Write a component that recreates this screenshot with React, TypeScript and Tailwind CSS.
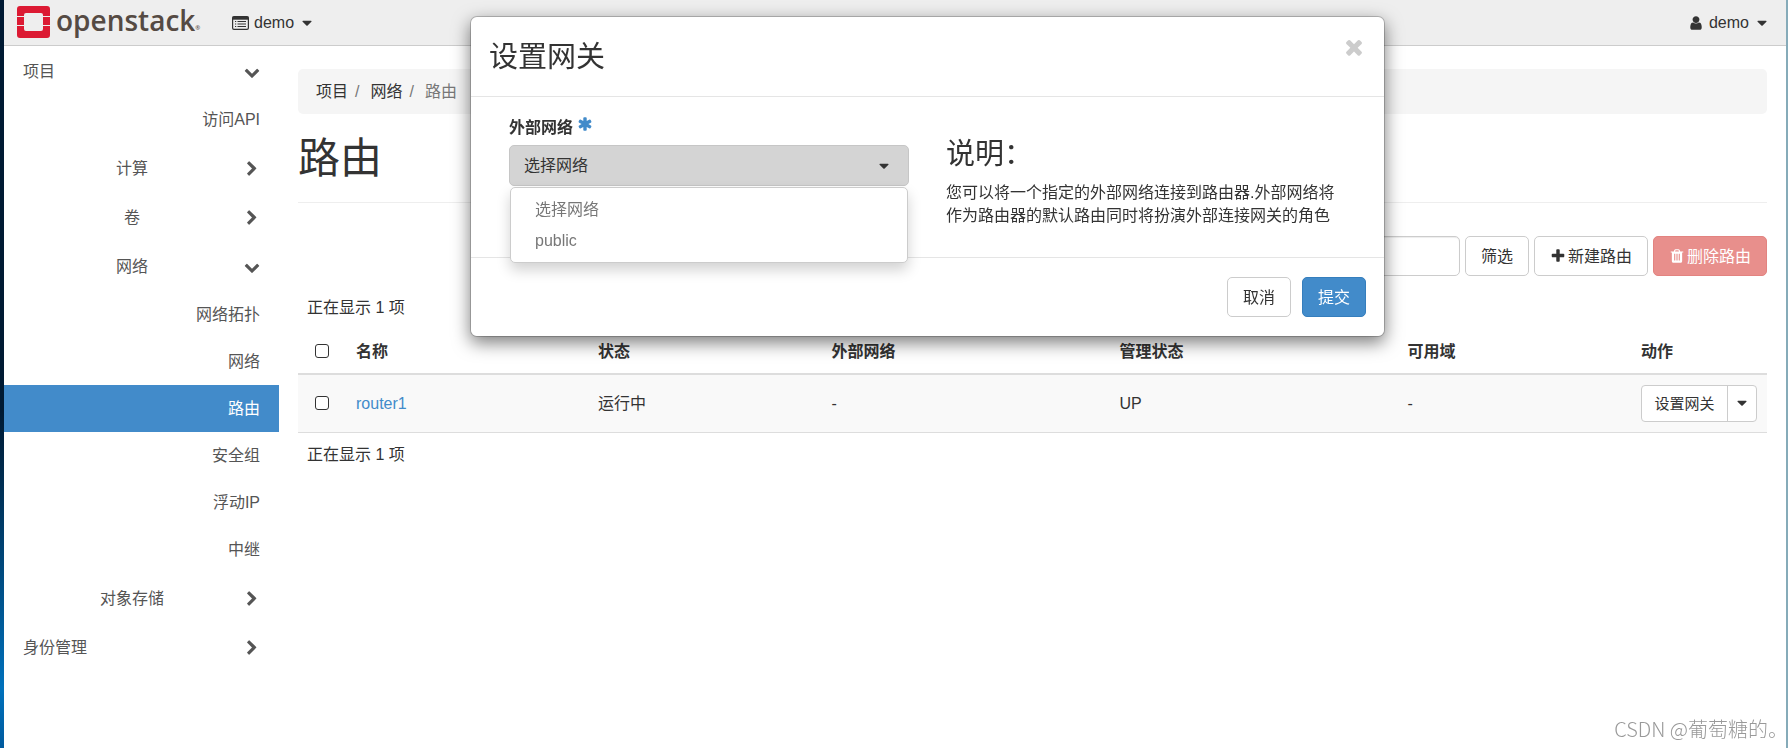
import { useState } from 'react';
import type { ReactNode } from 'react';

const icons = {
  caret: "M1408 704q0 26-19 45l-448 448q-19 19-45 19t-45-19l-448-448q-19-19-19-45t19-45 45-19h896q26 0 45 19t19 45z",
  chevronDown: "M1683 808l-742 741q-19 19-45 19t-45-19l-742-741q-19-19-19-45.5t19-45.5l166-165q19-19 45-19t45 19l531 531 531-531q19-19 45-19t45 19l166 165q19 19 19 45.5t-19 45.5z",
  chevronRight: "M1363 877l-742 742q-19 19-45 19t-45-19l-166-166q-19-19-19-45t19-45l531-531-531-531q-19-19-19-45t19-45l166-166q19-19 45-19t45 19l742 742q19 19 19 45t-19 45z",
  times: "M1490 1322q0 40-28 68l-136 136q-28 28-68 28t-68-28l-294-294-294 294q-28 28-68 28t-68-28l-136-136q-28-28-28-68t28-68l294-294-294-294q-28-28-28-68t28-68l136-136q28-28 68-28t68 28l294 294 294-294q28-28 68-28t68 28l136 136q28 28 28 68t-28 68l-294 294 294 294q28 28 28 68z",
  plus: "M1600 736v192q0 40-28 68t-68 28h-416v416q0 40-28 68t-68 28h-192q-40 0-68-28t-28-68v-416h-416q-40 0-68-28t-28-68v-192q0-40 28-68t68-28h416v-416q0-40 28-68t68-28h192q40 0 68 28t28 68v416h416q40 0 68 28t28 68z",
  asterisk: "M1546 1050q46 26 59.5 77.5t-12.5 97.5l-64 110q-26 46-77.5 59.5t-97.5-12.5l-266-153v307q0 52-38 90t-90 38h-128q-52 0-90-38t-38-90v-307l-266 153q-46 26-97.5 12.5t-77.5-59.5l-64-110q-26-46-12.5-97.5t59.5-77.5l266-154-266-154q-46-26-59.5-77.5t12.5-97.5l64-110q26-46 77.5-59.5t97.5 12.5l266 153v-307q0-52 38-90t90-38h128q52 0 90 38t38 90v307l266-153q46-26 97.5-12.5t77.5 59.5l64 110q26 46 12.5 97.5t-59.5 77.5l-266 154z",
  trash: "M704 1376v-704q0-14-9-23t-23-9h-64q-14 0-23 9t-9 23v704q0 14 9 23t23 9h64q14 0 23-9t9-23zm256 0v-704q0-14-9-23t-23-9h-64q-14 0-23 9t-9 23v704q0 14 9 23t23 9h64q14 0 23-9t9-23zm256 0v-704q0-14-9-23t-23-9h-64q-14 0-23 9t-9 23v704q0 14 9 23t23 9h64q14 0 23-9t9-23zm-544-992h448l-48-117q-7-9-17-11h-317q-10 2-17 11zm928 32v64q0 14-9 23t-23 9h-96v948q0 83-47 143.5t-113 60.5h-832q-66 0-113-58.5t-47-141.5v-952h-96q-14 0-23-9t-9-23v-64q0-14 9-23t23-9h309l70-167q15-37 54-63t79-26h320q40 0 79 26t54 63l70 167h309q14 0 23 9t9 23z",
  user: "M1536 1399q0 109-62.5 187t-150.5 78h-854q-88 0-150.5-78t-62.5-187q0-85 8.5-160.5t31.5-152 58.5-131 94-89 134.5-34.5q131 128 313 128t313-128q76 0 134.5 34.5t94 89 58.5 131 31.5 152 8.5 160.5zm-256-887q0 159-112.5 271.5t-271.5 112.5-271.5-112.5-112.5-271.5 112.5-271.5 271.5-112.5 271.5 112.5 112.5 271.5z",
};

function Icon({ name, className = "size-4" }: { name: keyof typeof icons; className?: string }) {
  return (
    <svg viewBox="0 0 1792 1792" fill="currentColor" aria-hidden="true" className={`shrink-0 ${className}`}>
      <path d={icons[name]} />
    </svg>
  );
}

function ListAltIcon() {
  return (
    <svg viewBox="0 0 17 14" fill="none" stroke="currentColor" aria-hidden="true" className="h-[14px] w-[17px] shrink-0">
      <rect x="0.6" y="0.6" width="15.8" height="12.8" rx="1.4" strokeWidth="1.2" />
      <path d="M0.6 2.2H16.4" strokeWidth="3" />
      <path d="M3 5.5h1.2M3 8h1.2M3 10.5h1.2M5.5 5.5H14M5.5 8H14M5.5 10.5H14" strokeWidth="1.2" />
    </svg>
  );
}

function Logo() {
  return (
    <a href="#" className="flex w-[183px] items-start gap-[6px] text-[#554a43]">
      <svg viewBox="0 0 33 32" aria-hidden="true" className="h-8 w-[33px] shrink-0">
        <path
          fill="#dc1a33"
          d="M3 0h27a3 3 0 0 1 3 3v7h-7V9a2 2 0 0 0-2-2H9a2 2 0 0 0-2 2v1H0V3a3 3 0 0 1 3-3zM0 20h7v3a2 2 0 0 0 2 2h15a2 2 0 0 0 2-2v-3h7v9a3 3 0 0 1-3 3H3a3 3 0 0 1-3-3z"
        />
        <path fill="#dc1a33" d="M0 11h7v8H0zM26 11h7v8h-7z" />
      </svg>
      <span className="flex items-end font-['Open_Sans','Noto_Sans',sans-serif] text-[28px] leading-7 font-semibold">
        openstack
        <span className="text-[6px] leading-3">®</span>
      </span>
    </a>
  );
}

const navItems = [
  { label: '项目', level: 1, open: true },
  { label: '访问API', level: 3, groupEnd: true },
  { label: '计算', level: 2 },
  { label: '卷', level: 2 },
  { label: '网络', level: 2, open: true },
  { label: '网络拓扑', level: 3 },
  { label: '网络', level: 3 },
  { label: '路由', level: 3, active: true },
  { label: '安全组', level: 3 },
  { label: '浮动IP', level: 3 },
  { label: '中继', level: 3, groupEnd: true },
  { label: '对象存储', level: 2 },
  { label: '身份管理', level: 1 },
];

function Sidebar() {
  return (
    <nav className="w-[275px] shrink-0 pt-px text-[#555]">
      <ul>
        {navItems.map((item, i) => (
          <li key={i} className={item.groupEnd ? 'mb-px' : ''}>
            {item.level === 3 ? (
              <a
                href="#"
                className={`flex h-[47px] items-center justify-end px-[19px] ${item.active ? 'bg-[#428bca] text-white' : ''}`}
              >
                {item.label}
              </a>
            ) : (
              <button type="button" className="flex h-[49px] w-full items-center pr-[17px] pl-[19px]">
                <span className={`grow ${item.level === 1 ? 'text-left' : 'text-center'}`}>{item.label}</span>
                <span className="flex w-[21px] justify-center">
                  <Icon name={item.open ? 'chevronDown' : 'chevronRight'} />
                </span>
              </button>
            )}
          </li>
        ))}
      </ul>
    </nav>
  );
}

interface ButtonProps {
  children: ReactNode;
  variant?: 'default' | 'primary' | 'danger';
  onClick?: () => void;
}

const variants = {
  default: 'border-[#ccc] bg-white text-[#333]',
  primary: 'border-[#357ebd] bg-[#428bca] text-white',
  danger: 'border-[#e38380] bg-[#e88f8c] text-white',
};

function Button({ children, variant = 'default', onClick }: ButtonProps) {
  return (
    <button
      type="button"
      onClick={onClick}
      className={`flex h-10 items-center gap-[2px] rounded-[5px] border px-[15px] whitespace-nowrap ${variants[variant]}`}
    >
      {children}
    </button>
  );
}

function Checkbox({ label }: { label: string }) {
  return (
    <input
      type="checkbox"
      aria-label={label}
      className="ml-2 block size-[14px] appearance-none rounded-[3px] border border-[#333] bg-white checked:bg-[#428bca]"
    />
  );
}

function RouterTable() {
  return (
    <>
      <p className="mt-5 px-[9px]">正在显示 1 项</p>
      <table className="mt-[10px] w-full table-fixed text-left">
        <thead>
          <tr className="h-[45px] border-b-2 border-[#ddd]">
            <th className="w-[49px] px-[9px]"><Checkbox label="全选" /></th>
            <th className="px-[9px]">名称</th>
            <th className="w-[15.9%] px-[9px]">状态</th>
            <th className="w-[19.6%] px-[9px]">外部网络</th>
            <th className="w-[19.6%] px-[9px]">管理状态</th>
            <th className="w-[15.9%] px-[9px]">可用域</th>
            <th className="w-[135px] px-[9px]">动作</th>
          </tr>
        </thead>
        <tbody>
          <tr className="h-[58px] border-b border-[#ddd] bg-[#f9f9f9]">
            <td className="px-[9px]"><Checkbox label="router1" /></td>
            <td className="px-[9px]"><a href="#" className="text-[#428bca]">router1</a></td>
            <td className="px-[9px]">运行中</td>
            <td className="px-[9px]">-</td>
            <td className="px-[9px]">UP</td>
            <td className="px-[9px]">-</td>
            <td className="px-[9px]">
              <div className="flex h-[37px] w-[116px] rounded-[4px] border border-[#ccc] bg-white text-[15px]">
                <button type="button" className="grow whitespace-nowrap">设置网关</button>
                <button type="button" aria-label="更多" className="flex w-[29px] items-center justify-center border-l border-[#ccc]">
                  <Icon name="caret" />
                </button>
              </div>
            </td>
          </tr>
        </tbody>
      </table>
      <p className="mt-[10px] px-[9px]">正在显示 1 项</p>
    </>
  );
}

function GatewayModal({ onClose }: { onClose: () => void }) {
  const [selected, setSelected] = useState('选择网络');
  const [menuOpen, setMenuOpen] = useState(true);

  const pick = (option: string) => {
    setSelected(option);
    setMenuOpen(false);
  };

  return (
    <div className="pointer-events-none fixed inset-0 flex items-start justify-center pt-4 pl-[67px]">
      <div
        role="dialog"
        aria-labelledby="gateway-title"
        className="pointer-events-auto w-[915px] rounded-[7px] border border-black/20 bg-white bg-clip-padding shadow-[0_6px_17px_rgba(0,0,0,0.5)]"
      >
        {/* Header */}
        <div className="flex items-start justify-between border-b border-[#e5e5e5] px-[18px] pt-[18px] pb-[17px]">
          <h3 id="gateway-title" className="text-[29px] leading-[44px]">设置网关</h3>
          <button type="button" aria-label="关闭" onClick={onClose} className="text-[#ccc]">
            <Icon name="times" className="size-6" />
          </button>
        </div>

        {/* Body */}
        <div className="grid grid-cols-2 gap-[37px] px-[38px]">
          <div className="pt-[19px]">
            <label htmlFor="network" className="mb-[6px] flex gap-1 font-bold">
              外部网络
              <Icon name="asterisk" className="size-4 text-[#428bca]" />
            </label>
            <div className="relative">
              <button
                id="network"
                type="button"
                aria-haspopup="listbox"
                aria-expanded={menuOpen}
                onClick={() => setMenuOpen(!menuOpen)}
                className="flex h-[41px] w-full items-center justify-between rounded-[5px] border border-[#c6c6c6] bg-[#d4d4d4] pr-4 pl-[14px]"
              >
                {selected}
                <Icon name="caret" />
              </button>
              {menuOpen && (
                <ul
                  role="listbox"
                  className="absolute inset-x-px top-full mt-px rounded-[5px] border border-[#ccc] bg-white py-[6px] text-[#777] shadow-[0_7px_14px_rgba(0,0,0,0.18)]"
                >
                  {['选择网络', 'public'].map((option) => (
                    <li key={option} role="option" aria-selected={option === selected}>
                      <button type="button" onClick={() => pick(option)} className="h-[31px] w-full px-6 text-left">
                        {option}
                      </button>
                    </li>
                  ))}
                </ul>
              )}
            </div>
          </div>
          <div className="pt-[41px] pb-[30px]">
            <h3 className="mb-[11px] text-[29px] leading-8">说明：</h3>
            <p>您可以将一个指定的外部网络连接到路由器.外部网络将作为路由器的默认路由同时将扮演外部连接网关的角色</p>
          </div>
        </div>

        {/* Footer */}
        <div className="flex justify-end gap-[11px] border-t border-[#e5e5e5] px-[18px] py-[19px]">
          <Button onClick={onClose}>取消</Button>
          <Button variant="primary" onClick={onClose}>提交</Button>
        </div>
      </div>
    </div>
  );
}

export default function App() {
  const [showModal, setShowModal] = useState(true);

  return (
    <div className="flex min-h-screen bg-white font-['Liberation_Sans','Noto_Sans_CJK_SC',sans-serif] text-base leading-[23px] text-[#333]">
      <div className="w-1 shrink-0 bg-linear-to-b from-[#001a33] from-55% via-[#0071bc] via-92% to-[#005a9e]" />

      <div className="flex min-w-0 grow flex-col">
        <header className="flex h-[46px] items-center border-b border-[#ccc] bg-[#eee] pr-4 pl-[13px]">
          <div className="pb-[2px]">
            <Logo />
          </div>
          <button type="button" className="ml-8 flex items-center gap-[5px]">
            <ListAltIcon />
            demo
            <Icon name="caret" />
          </button>
          <button type="button" className="ml-auto flex items-center gap-[5px]">
            <Icon name="user" />
            demo
            <Icon name="caret" />
          </button>
        </header>

        <div className="flex grow">
          <Sidebar />
          <main className="min-w-0 grow px-[19px] pt-[23px]">
            <ol className="flex rounded-[5px] bg-[#f5f5f5] px-[18px] py-[11px]">
              <li><a href="#">项目</a><span className="px-[7px] text-[#777]">/</span></li>
              <li className="pl-1"><a href="#">网络</a><span className="px-[7px] text-[#777]">/</span></li>
              <li className="pl-1 text-[#777]">路由</li>
            </ol>

            <h1 className="mt-[21px] border-b border-[#eee] pb-5 text-[42px] leading-[47px]">路由</h1>

            <div className="mt-[33px] flex justify-end gap-[5px]">
              <input
                type="text"
                aria-label="筛选条件"
                className="h-10 w-[200px] rounded-[5px] border border-[#ccc] px-[14px] shadow-[inset_0_1px_1px_rgba(0,0,0,0.075)]"
              />
              <Button>筛选</Button>
              <Button onClick={() => setShowModal(true)}><Icon name="plus" />新建路由</Button>
              <Button variant="danger"><Icon name="trash" />删除路由</Button>
            </div>

            <RouterTable />
          </main>
        </div>
      </div>

      <div className="w-[2px] shrink-0 bg-[#86abb9]" />

      {showModal && <GatewayModal onClose={() => setShowModal(false)} />}

      <div className="pointer-events-none fixed right-0 bottom-[7px] font-['Noto_Sans_CJK_SC',sans-serif] text-xl leading-6 font-light text-[#999]">
        CSDN @葡萄糖的。
      </div>
    </div>
  );
}
